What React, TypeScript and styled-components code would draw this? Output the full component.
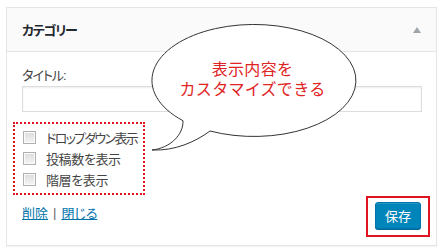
import React from 'react';
import styled, { createGlobalStyle } from 'styled-components';

const GlobalStyle = createGlobalStyle`
  body {
    margin: 0;
    background: #fff;
    font-family: "Liberation Sans", "Noto Sans CJK JP", sans-serif;
    font-feature-settings: "palt";
    color: #23282d;
  }
`;

const Page = styled.div`
  position: relative;
  width: 443px;
  height: 250px;
  padding: 7px 6px 0;
  box-sizing: border-box;
`;

const Widget = styled.div`
  border: 1px solid #e5e5e5;
  box-shadow: 0 1px 1px rgba(0, 0, 0, 0.04);
  background: #fff;
  height: 239px;
  box-sizing: border-box;
`;

const Header = styled.div`
  display: flex;
  align-items: center;
  justify-content: space-between;
  height: 43px;
  padding: 0 15px;
  background: #fafafa;
  border-bottom: 1px solid #e5e5e5;
`;

const Title = styled.h3`
  margin: 0;
  font-size: 13px;
  font-weight: bold;
  letter-spacing: -1.2px;
  color: #23282d;
`;

const Arrow = styled.span`
  width: 0;
  height: 0;
  border-left: 4px solid transparent;
  border-right: 4px solid transparent;
  border-bottom: 6px solid #a0a5aa;
`;

const Body = styled.div`
  padding: 15px 15px 0;
`;

const Label = styled.label`
  display: block;
  font-size: 13px;
  line-height: 18px;
  letter-spacing: -1px;
  color: #444;
  margin-bottom: 1px;
`;

const TextInput = styled.input`
  display: block;
  width: 400px;
  height: 26px;
  box-sizing: border-box;
  border: 1px solid #ddd;
  box-shadow: inset 0 1px 2px rgba(0, 0, 0, 0.07);
  margin: 0;
`;

const Options = styled.div`
  margin: 10px 0 0 -9px;
  width: 132px;
  height: 73px;
  box-sizing: border-box;
  border: 2px dotted #e0141e;
  padding: 3px 0 0 8px;
`;

const OptionRow = styled.label<{ $spacing: number }>`
  display: flex;
  align-items: center;
  gap: 10px;
  height: 21px;
  font-size: 13px;
  letter-spacing: ${(p) => p.$spacing}px;
  color: #444;
  white-space: nowrap;
`;

const Box = styled.span`
  flex-shrink: 0;
  width: 13px;
  height: 13px;
  box-sizing: border-box;
  border: 1px solid #b0b0b0;
  background: linear-gradient(#dcdcdc, #f4f4f4);
  box-shadow: inset 0 0 0 1px #fafafa;
`;

const Footer = styled.div`
  display: flex;
  justify-content: space-between;
  align-items: flex-start;
  margin-top: 1px;
`;

const Links = styled.div`
  display: flex;
  align-items: center;
  gap: 5px;
  padding-top: 7px;
  font-size: 13px;
  color: #666;
`;

const Link = styled.a`
  color: #0073aa;
  text-decoration: underline;
  cursor: pointer;
`;

const Highlight = styled.div`
  border: 2px solid #e0141e;
  padding: 4px 7px 6px;
  margin-right: -9px;
`;

const SaveButton = styled.button`
  width: 46px;
  height: 27px;
  padding: 0;
  border: 1px solid #0073aa;
  border-radius: 3px;
  background: #0085ba;
  box-shadow: 0 1px 0 #006799, inset 0 1px 0 rgba(255, 255, 255, 0.15);
  color: #fff;
  font-family: "Liberation Sans", "Noto Sans CJK JP", sans-serif;
  font-size: 13px;
`;

const Bubble = styled.div`
  position: absolute;
  left: 140px;
  top: 20px;
  width: 225px;
  height: 135px;
`;

const BubbleText = styled.div`
  position: absolute;
  left: 0;
  right: 0;
  top: 40px;
  text-align: center;
  font-size: 16px;
  line-height: 20px;
  letter-spacing: 0.3px;
  color: #e02424;
  font-feature-settings: normal;
`;

const options = [
  { label: 'ドロップダウン表示', spacing: -1.7 },
  { label: '投稿数を表示', spacing: -0.4 },
  { label: '階層を表示', spacing: -0.4 },
];

const App: React.FC = () => {
  return (
    <Page>
      <GlobalStyle />
      <Widget>
        <Header>
          <Title>カテゴリー</Title>
          <Arrow />
        </Header>
        <Body>
          <Label>タイトル:</Label>
          <TextInput type="text" />
          <Options>
            {options.map((o) => (
              <OptionRow key={o.label} $spacing={o.spacing}>
                <Box />
                {o.label}
              </OptionRow>
            ))}
          </Options>
          <Footer>
            <Links>
              <Link>削除</Link>|<Link>閉じる</Link>
            </Links>
            <Highlight>
              <SaveButton>保存</SaveButton>
            </Highlight>
          </Footer>
        </Body>
      </Widget>
      <Bubble>
        <svg width="225" height="135" viewBox="140 20 225 135">
          <path
            d="M183,120.7 C183.5,135 170,148 152,150 C175,151 195,142 210,131 A102,56 0 1 0 183,120.7 Z"
            fill="#fff"
            stroke="#333"
            strokeWidth="1"
          />
        </svg>
        <BubbleText>
          表示内容を
          <br />
          カスタマイズできる
        </BubbleText>
      </Bubble>
    </Page>
  );
};

export default App;
